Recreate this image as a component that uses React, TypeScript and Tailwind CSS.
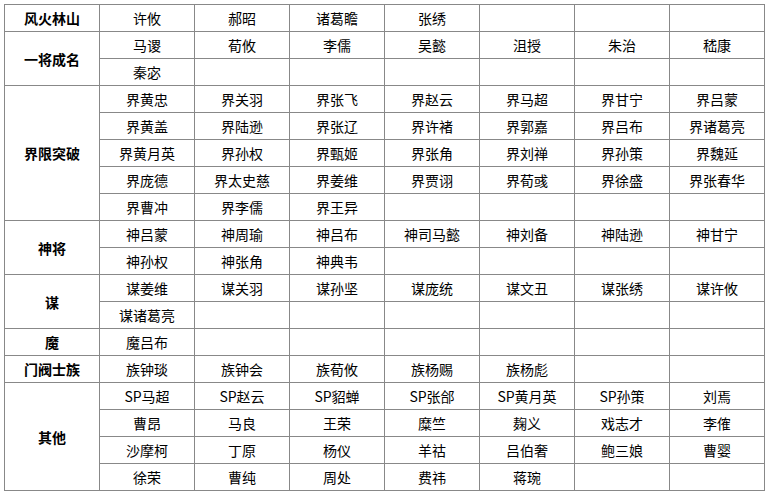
const groups: { name: string; rows: string[][] }[] = [
  { name: '风火林山', rows: [['许攸', '郝昭', '诸葛瞻', '张绣']] },
  {
    name: '一将成名',
    rows: [
      ['马谡', '荀攸', '李儒', '吴懿', '沮授', '朱治', '嵇康'],
      ['秦宓'],
    ],
  },
  {
    name: '界限突破',
    rows: [
      ['界黄忠', '界关羽', '界张飞', '界赵云', '界马超', '界甘宁', '界吕蒙'],
      ['界黄盖', '界陆逊', '界张辽', '界许褚', '界郭嘉', '界吕布', '界诸葛亮'],
      ['界黄月英', '界孙权', '界甄姬', '界张角', '界刘禅', '界孙策', '界魏延'],
      ['界庞德', '界太史慈', '界姜维', '界贾诩', '界荀彧', '界徐盛', '界张春华'],
      ['界曹冲', '界李儒', '界王异'],
    ],
  },
  {
    name: '神将',
    rows: [
      ['神吕蒙', '神周瑜', '神吕布', '神司马懿', '神刘备', '神陆逊', '神甘宁'],
      ['神孙权', '神张角', '神典韦'],
    ],
  },
  {
    name: '谋',
    rows: [
      ['谋姜维', '谋关羽', '谋孙坚', '谋庞统', '谋文丑', '谋张绣', '谋许攸'],
      ['谋诸葛亮'],
    ],
  },
  { name: '魔', rows: [['魔吕布']] },
  { name: '门阀士族', rows: [['族钟琰', '族钟会', '族荀攸', '族杨赐', '族杨彪']] },
  {
    name: '其他',
    rows: [
      ['SP马超', 'SP赵云', 'SP貂蝉', 'SP张郃', 'SP黄月英', 'SP孙策', '刘焉'],
      ['曹昂', '马良', '王荣', '糜竺', '麹义', '戏志才', '李傕'],
      ['沙摩柯', '丁原', '杨仪', '羊祜', '吕伯奢', '鲍三娘', '曹婴'],
      ['徐荣', '曹纯', '周处', '费祎', '蒋琬'],
    ],
  },
];

const pad = (row: string[]) => [...row, ...Array(7 - row.length).fill('')];

export default function App() {
  return (
    <div className="w-[770px] h-[495px] bg-white pt-[4px] pl-[4px] font-['Microsoft_YaHei','Noto_Sans_CJK_SC',sans-serif] text-[14px] text-black">
      <table className="table-fixed border-collapse w-[760px]">
        <colgroup>
          {Array.from({ length: 8 }).map((_, i) => (
            <col key={i} className="w-[95px]" />
          ))}
        </colgroup>
        <tbody>
          {groups.map((g) =>
            g.rows.map((row, ri) => (
              <tr key={g.name + ri} className="h-[27px]">
                {ri === 0 && (
                  <td
                    rowSpan={g.rows.length}
                    className="border border-[#888] text-center align-middle font-bold p-0 leading-none"
                  >
                    {g.name}
                  </td>
                )}
                {pad(row).map((c, ci) => (
                  <td key={ci} className="border border-[#888] text-center align-middle p-0 leading-none">
                    {c}
                  </td>
                ))}
              </tr>
            ))
          )}
        </tbody>
      </table>
    </div>
  );
}
